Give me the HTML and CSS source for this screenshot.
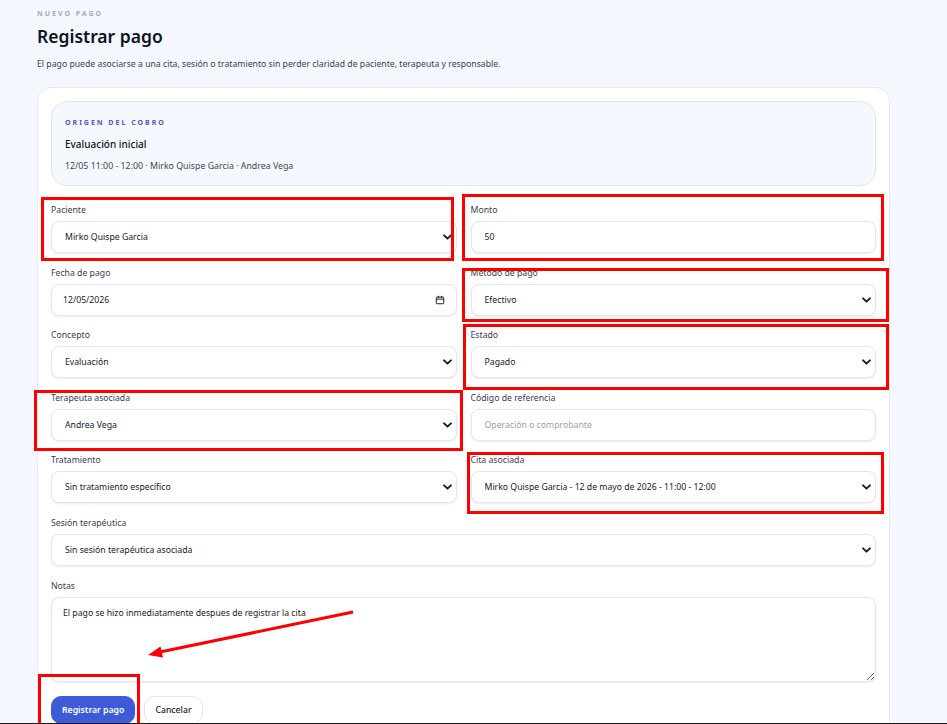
FILE: index.html
```html
<!DOCTYPE html>
<html lang="es">
<head>
    <meta charset="UTF-8">
    <meta name="viewport" content="width=device-width, initial-scale=1.0">
    <title>Registrar pago</title>
    <link rel="stylesheet" href="styles.css">
</head>
<body>
    <div class="page">
        <div class="page-head">
            <p class="eyebrow">Nuevo pago</p>
            <h1>Registrar pago</h1>
            <p class="lead">El pago puede asociarse a una cita, sesión o tratamiento sin perder claridad de paciente, terapeuta y responsable.</p>
        </div>

        <form class="card">
            <div class="origin">
                <p class="origin-label">Origen del cobro</p>
                <p class="origin-title">Evaluación inicial</p>
                <p class="origin-meta">12/05 11:00 - 12:00 · Mirko Quispe Garcia · Andrea Vega</p>
            </div>

            <div class="fields">
                <label class="field">
                    <span class="field-label">Paciente</span>
                    <span class="control">
                        <select><option>Mirko Quispe Garcia</option></select>
                        <svg class="chevron" viewBox="0 0 10 6"><path d="M1.2 1.2l3.8 3.6 3.8-3.6"/></svg>
                    </span>
                </label>
                <label class="field">
                    <span class="field-label">Monto</span>
                    <span class="control"><input type="text" value="50"></span>
                </label>

                <label class="field">
                    <span class="field-label">Fecha de pago</span>
                    <span class="control">
                        <input type="text" class="date" value="12/05/2026">
                        <svg class="calendar" viewBox="0 0 12 12"><rect x="1.5" y="2.5" width="9" height="8" rx="1"/><path d="M1.5 5h9M4 1v2.5M8 1v2.5"/></svg>
                    </span>
                </label>
                <label class="field">
                    <span class="field-label">Método de pago</span>
                    <span class="control">
                        <select><option>Efectivo</option></select>
                        <svg class="chevron" viewBox="0 0 10 6"><path d="M1.2 1.2l3.8 3.6 3.8-3.6"/></svg>
                    </span>
                </label>

                <label class="field">
                    <span class="field-label">Concepto</span>
                    <span class="control">
                        <select><option>Evaluación</option></select>
                        <svg class="chevron" viewBox="0 0 10 6"><path d="M1.2 1.2l3.8 3.6 3.8-3.6"/></svg>
                    </span>
                </label>
                <label class="field">
                    <span class="field-label">Estado</span>
                    <span class="control">
                        <select><option>Pagado</option></select>
                        <svg class="chevron" viewBox="0 0 10 6"><path d="M1.2 1.2l3.8 3.6 3.8-3.6"/></svg>
                    </span>
                </label>

                <label class="field">
                    <span class="field-label">Terapeuta asociada</span>
                    <span class="control">
                        <select><option>Andrea Vega</option></select>
                        <svg class="chevron" viewBox="0 0 10 6"><path d="M1.2 1.2l3.8 3.6 3.8-3.6"/></svg>
                    </span>
                </label>
                <label class="field">
                    <span class="field-label">Código de referencia</span>
                    <span class="control"><input type="text" placeholder="Operación o comprobante"></span>
                </label>

                <label class="field">
                    <span class="field-label">Tratamiento</span>
                    <span class="control">
                        <select><option>Sin tratamiento específico</option></select>
                        <svg class="chevron" viewBox="0 0 10 6"><path d="M1.2 1.2l3.8 3.6 3.8-3.6"/></svg>
                    </span>
                </label>
                <label class="field">
                    <span class="field-label">Cita asociada</span>
                    <span class="control">
                        <select><option>Mirko Quispe Garcia - 12 de mayo de 2026 - 11:00 - 12:00</option></select>
                        <svg class="chevron" viewBox="0 0 10 6"><path d="M1.2 1.2l3.8 3.6 3.8-3.6"/></svg>
                    </span>
                </label>

                <label class="field wide">
                    <span class="field-label">Sesión terapéutica</span>
                    <span class="control">
                        <select><option>Sin sesión terapéutica asociada</option></select>
                        <svg class="chevron" viewBox="0 0 10 6"><path d="M1.2 1.2l3.8 3.6 3.8-3.6"/></svg>
                    </span>
                </label>

                <label class="field wide">
                    <span class="field-label">Notas</span>
                    <span class="control"><textarea>El pago se hizo inmediatamente despues de registrar la cita</textarea></span>
                </label>
            </div>

            <div class="actions">
                <button type="button" class="btn btn-primary">Registrar pago</button>
                <button type="button" class="btn">Cancelar</button>
            </div>
        </form>
    </div>

    <!-- review marks drawn over the screenshot -->
    <svg class="marks" viewBox="0 0 947 724">
        <g fill="none" stroke="#ff0000" stroke-width="3">
            <rect x="42.5" y="198.5" width="410" height="61"/>
            <rect x="463.5" y="195.5" width="419" height="64"/>
            <rect x="463.5" y="269.5" width="424" height="51"/>
            <rect x="464.5" y="325.5" width="423" height="63"/>
            <rect x="35.5" y="391.5" width="426" height="58"/>
            <rect x="468.5" y="453.5" width="414" height="59"/>
            <rect x="39.5" y="675.5" width="99" height="60"/>
            <line x1="353" y1="612" x2="160" y2="652"/>
        </g>
        <polygon fill="#ff0000" points="148,655 163,657.5 160.5,646.5"/>
        <rect x="0" y="723" width="947" height="1" fill="#1c1c1c"/>
    </svg>
</body>
</html>
```

FILE: styles.css
```css
:root {
    --page-bg: #f4f7fd;
    --line: #e2e7f0;
    --text: #141a2b;
    --muted: #4a5263;
    --primary: #3d5bd9;
}

html {
    overflow: hidden;
}

body {
    margin: 0;
    position: relative;
    min-height: 724px;
    background-color: var(--page-bg);
    font-family: 'Noto Sans', 'Liberation Sans', sans-serif;
    color: var(--text);
}

.page {
    padding: 9px 57px 0 37px;
}

.page-head p,
.page-head h1 {
    margin: 0;
}

.eyebrow {
    font-size: 7px;
    font-weight: 700;
    letter-spacing: 2px;
    text-transform: uppercase;
    color: #a3abc0;
    line-height: 10px;
}

.page-head h1 {
    margin-top: 4px;
    font-size: 17.5px;
    font-weight: 600;
    line-height: 26px;
    color: #0d1324;
}

.lead {
    margin-top: 9px !important;
    font-size: 8.7px;
    line-height: 12px;
    color: #3b4253;
}

.card {
    margin-top: 17px;
    background: #fff;
    border: 1px solid #e4e9f2;
    border-radius: 14px;
    padding: 13px 13px 40px;
}

.origin {
    background: #f5f9ff;
    border: 1px solid #dce6f5;
    border-radius: 16px;
    padding: 16px 13px 13px;
}

.origin p {
    margin: 0;
}

.origin-label {
    font-size: 7px;
    font-weight: 700;
    letter-spacing: 2px;
    text-transform: uppercase;
    color: #4b58c4;
    line-height: 10px;
}

.origin-title {
    margin-top: 9px !important;
    font-size: 10px;
    font-weight: 500;
    line-height: 14px;
    color: #0d1324;
}

.origin-meta {
    margin-top: 9px !important;
    font-size: 8.8px;
    line-height: 12px;
    color: #3d4455;
}

.fields {
    margin-top: 18px;
    display: grid;
    grid-template-columns: 1fr 1fr;
    column-gap: 14px;
    row-gap: 13.6px;
}

.field {
    display: flex;
    flex-direction: column;
    gap: 4px;
}

.field.wide {
    grid-column: 1 / -1;
}

.field-label {
    font-size: 8.7px;
    line-height: 13px;
    color: #374052;
}

.control {
    position: relative;
    display: block;
}

.control input,
.control select,
.control textarea {
    display: block;
    box-sizing: border-box;
    width: 100%;
    height: 32px;
    margin: 0;
    padding: 0 30px 0 13px;
    font-family: inherit;
    font-size: 8.7px;
    color: var(--text);
    background: #fff;
    border: 1px solid var(--line);
    border-radius: 8px;
    box-shadow: 0 1px 2px rgba(20, 30, 60, 0.09);
    outline: none;
    appearance: none;
    -webkit-appearance: none;
}

.control input.date {
    padding-left: 11px;
}

.control input::placeholder {
    color: #98a1b5;
}

.control textarea {
    height: 85px;
    padding: 9px 11px;
    resize: vertical;
    line-height: 12px;
}

.chevron {
    position: absolute;
    right: 5px;
    top: 13px;
    width: 9px;
    height: 6px;
    fill: none;
    stroke: #1a1f2e;
    stroke-width: 2.2;
    stroke-linecap: round;
    stroke-linejoin: round;
    pointer-events: none;
}

.calendar {
    position: absolute;
    right: 12px;
    top: 11px;
    width: 10px;
    height: 10px;
    fill: none;
    stroke: #1a1f2e;
    stroke-width: 1.2;
    pointer-events: none;
}

.actions {
    margin-top: 14px;
    display: flex;
    gap: 9px;
}

.btn {
    height: 28px;
    padding: 0 10px;
    font-family: inherit;
    font-size: 8.7px;
    font-weight: 500;
    white-space: nowrap;
    color: #1b2130;
    background: #fff;
    border: 1px solid var(--line);
    border-radius: 10px;
    cursor: pointer;
}

.btn-primary {
    padding: 0 10px;
    font-weight: 600;
    color: #fff;
    background: var(--primary);
    border-color: var(--primary);
}

.marks {
    position: absolute;
    top: 0;
    left: 0;
    width: 947px;
    height: 724px;
    pointer-events: none;
}
```
